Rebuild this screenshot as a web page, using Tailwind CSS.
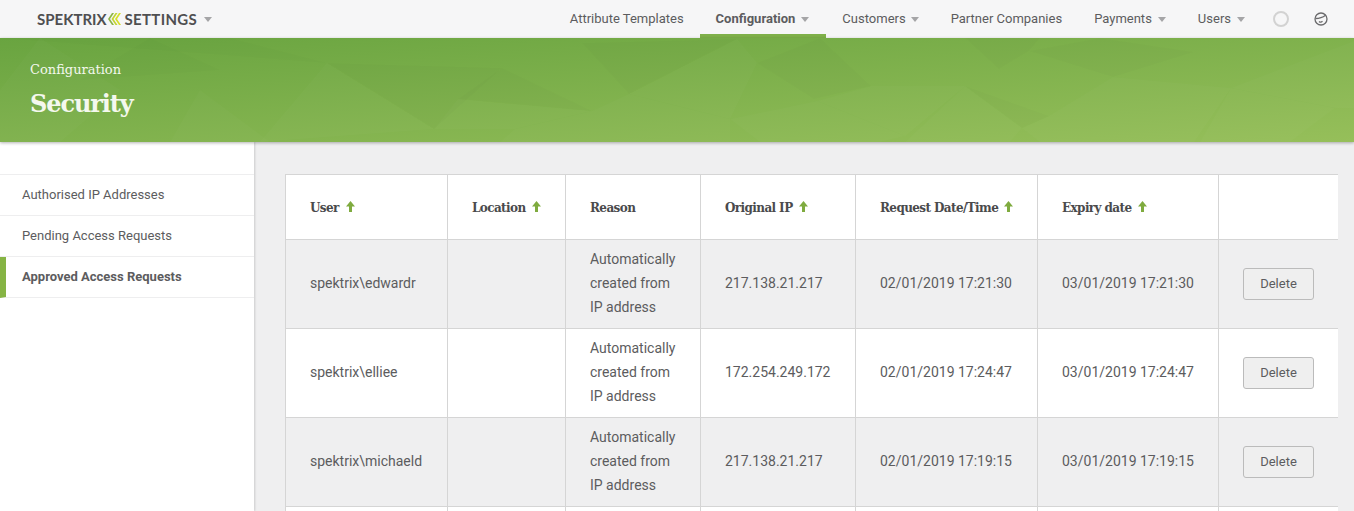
<!DOCTYPE html>
<html lang="en">
<head>
    <meta charset="UTF-8">
    <title>Security - Spektrix Settings</title>
    <script src="https://cdn.jsdelivr.net/npm/@tailwindcss/browser@4"></script>
</head>
<body class="h-[511px] overflow-hidden bg-[#efeff0] font-['Roboto',sans-serif] text-[#5c5c5e]">
    <header class="flex h-[38px] items-center justify-between bg-[#f6f6f7] pl-[37px] pr-[26px]">
        <div class="flex items-center font-['Lato',sans-serif] text-[15px] font-bold text-[#4f4f51]">
            <span>SPEKTRIX</span>
            <svg width="14" height="12" viewBox="0 0 14 12">
                <path d="M5 0h2L3 6l4 6H5L1 6z" fill="#8db545"/>
                <path d="M8.500 0h2l-4 6 4 6h-2l-4-6z" fill="#c3d52f"/>
                <path d="M12 0h2l-4 6 4 6h-2L8 6z" fill="#d6de2b"/>
            </svg>
            <span class="ml-[4px] tracking-[0.3px]">SETTINGS</span>
            <span class="ml-[7px] h-0 w-0 border-x-[4.500px] border-t-[5px] border-x-transparent border-t-[#a5a5a7]"></span>
        </div>
        <nav class="flex h-full items-center text-[13px]">
            <a class="flex h-full items-center px-4">Attribute Templates</a>
            <a class="flex h-full items-center border-b-[4px] border-[#7fb04a] pl-4 pr-[17px] pt-[4px] font-bold">Configuration<span class="ml-[6px] h-0 w-0 border-x-[4.500px] border-t-[5px] border-x-transparent border-t-[#a5a5a7]"></span></a>
            <a class="flex h-full items-center px-4">Customers<span class="ml-[5px] h-0 w-0 border-x-[4.500px] border-t-[5px] border-x-transparent border-t-[#a5a5a7]"></span></a>
            <a class="flex h-full items-center px-4">Partner Companies</a>
            <a class="flex h-full items-center px-4">Payments<span class="ml-[6px] h-0 w-0 border-x-[4.500px] border-t-[5px] border-x-transparent border-t-[#a5a5a7]"></span></a>
            <a class="flex h-full items-center pl-4 pr-[28px]">Users<span class="ml-[6px] h-0 w-0 border-x-[4.500px] border-t-[5px] border-x-transparent border-t-[#a5a5a7]"></span></a>
            <span class="h-4 w-4 rounded-full border-2 border-[#d2d2d2]"></span>
            <svg class="ml-[25px]" width="14" height="14" viewBox="0 0 14 14" fill="none" stroke="#6a6a6c" stroke-width="1.300">
                <circle cx="7" cy="7" r="6"/>
                <path d="M1.500 6.500C4 6.500 8 6 11.500 3.200"/>
                <path d="M5 9.500c1 .8 2.500.8 3.500-.2"/>
            </svg>
        </nav>
    </header>

    <section class="relative h-[104px] overflow-hidden bg-gradient-to-br from-[#69a440] to-[#96bf5a] shadow-[0_1px_3px_rgba(0,0,0,0.3)]">
        <svg class="absolute inset-0" width="1354" height="104" viewBox="0 38 1354 104">
            <g fill="#000" fill-opacity="0.012">
                <polygon points="0,38 327,63 230,38"/>
                <polygon points="327,63 434,129 502,68"/>
                <polygon points="582,43 629,94 737,39"/>
                <polygon points="757,63 814,99 871,86 820,38"/>
                <polygon points="965,38 999,69 1029,51 1040,38"/>
                <polygon points="1113,77 1194,52 1100,38 1029,51"/>
                <polygon points="458,99 592,111 502,68"/>
                <polygon points="80,80 150,38 220,70"/>
                <polygon points="1022,128 1049,116 965,86"/>
            </g>
            <g fill="#fff" fill-opacity="0.018">
                <polygon points="629,94 730,119 757,63 737,39"/>
                <polygon points="629,94 592,111 515,129 500,142 730,142 730,119"/>
                <polygon points="817,101 905,136 965,86 871,86"/>
                <polygon points="905,142 965,86 1022,128 1010,142"/>
                <polygon points="1113,77 1049,116 1022,128 1040,142 1194,142 1231,88"/>
                <polygon points="1231,88 1354,41 1354,108 1335,108"/>
                <polygon points="1231,88 1335,108 1290,142 1200,142"/>
                <polygon points="327,63 260,142 434,129"/>
                <polygon points="730,119 817,101 905,136 880,142 760,142"/>
                <polygon points="40,38 120,90 60,142 0,142 0,90"/>
                <polygon points="458,99 434,129 515,129 592,111"/>
                <polygon points="200,90 270,142 170,142"/>
            </g>
        </svg>
        <div class="relative pl-[30px] pt-[23px] font-['DejaVu_Serif',serif] text-[#f4f8ee]">
            <div class="text-[13px] leading-[18px]">Configuration</div>
            <h1 class="mt-[7px] text-[24px] font-bold leading-[36px] tracking-[-1.100px]">Security</h1>
        </div>
    </section>

    <div class="flex h-[369px]">
        <aside class="w-[254px] shrink-0 bg-white pt-[32px] text-[13px] shadow-[1px_0_2px_rgba(0,0,0,0.15)]">
            <a class="flex h-[42px] items-center border-y border-[#eeeeef] pl-[22px]">Authorised IP Addresses</a>
            <a class="flex h-[41px] items-center border-b border-[#eeeeef] pl-[22px]">Pending Access Requests</a>
            <a class="flex h-[41px] items-center border-b border-[#eeeeef] border-l-[6px] border-l-[#86b444] pl-[16px] font-bold">Approved Access Requests</a>
        </aside>
        <main class="flex-1 overflow-hidden pl-[31px] pt-[32px]">
            <table class="w-[1052px] table-fixed border-collapse text-left text-[14px]">
                <colgroup>
                    <col class="w-[162px]"><col class="w-[118px]"><col class="w-[135px]"><col class="w-[155px]"><col class="w-[182px]"><col class="w-[181px]"><col class="w-[119px]">
                </colgroup>
                <thead>
                    <tr class="h-[65px] bg-white font-['DejaVu_Serif',serif] text-[12px] tracking-[-0.6px] text-[#4a4a4c]">
                        <th class="border border-[#d5d5d5] pl-6 pt-[2px] font-bold">User<svg class="ml-[7px] inline align-[0px]" width="9" height="11" viewBox="0 0 9 11"><path d="M4.500 0L9 5.500H6V11H3V5.500H0z" fill="#7fab3f"/></svg></th>
                        <th class="border border-[#d5d5d5] pl-6 pt-[2px] font-bold">Location<svg class="ml-[6px] inline align-[0px]" width="9" height="11" viewBox="0 0 9 11"><path d="M4.500 0L9 5.500H6V11H3V5.500H0z" fill="#7fab3f"/></svg></th>
                        <th class="border border-[#d5d5d5] pl-6 pt-[2px] font-bold">Reason</th>
                        <th class="border border-[#d5d5d5] pl-6 pt-[2px] font-bold">Original IP<svg class="ml-[6px] inline align-[0px]" width="9" height="11" viewBox="0 0 9 11"><path d="M4.500 0L9 5.500H6V11H3V5.500H0z" fill="#7fab3f"/></svg></th>
                        <th class="border border-[#d5d5d5] pl-6 pt-[2px] font-bold">Request Date/Time<svg class="ml-[6px] inline align-[0px]" width="9" height="11" viewBox="0 0 9 11"><path d="M4.500 0L9 5.500H6V11H3V5.500H0z" fill="#7fab3f"/></svg></th>
                        <th class="border border-[#d5d5d5] pl-6 pt-[2px] font-bold">Expiry date<svg class="ml-[7px] inline align-[0px]" width="9" height="11" viewBox="0 0 9 11"><path d="M4.500 0L9 5.500H6V11H3V5.500H0z" fill="#7fab3f"/></svg></th>
                        <th class="border-y border-l border-[#d5d5d5]"></th>
                    </tr>
                </thead>
                <tbody>
                    <tr class="h-[89px] bg-[#efeff0]">
                        <td class="border border-[#d5d5d5] pb-[2px] pl-6">spektrix\edwardr</td>
                        <td class="border border-[#d5d5d5] pl-6"></td>
                        <td class="border border-[#d5d5d5] pb-[2px] pl-6 pr-5 leading-6">Automatically created from IP address</td>
                        <td class="border border-[#d5d5d5] pb-[2px] pl-6">217.138.21.217</td>
                        <td class="border border-[#d5d5d5] pb-[2px] pl-6">02/01/2019 17:21:30</td>
                        <td class="border border-[#d5d5d5] pb-[2px] pl-6">03/01/2019 17:21:30</td>
                        <td class="border-y border-l border-[#d5d5d5] pl-6"><button class="h-8 w-[71px] rounded-[3px] border border-[#bbbbbb] bg-[#efefef] text-[13px]">Delete</button></td>
                    </tr>
                    <tr class="h-[89px] bg-white">
                        <td class="border border-[#d5d5d5] pb-[2px] pl-6">spektrix\elliee</td>
                        <td class="border border-[#d5d5d5] pl-6"></td>
                        <td class="border border-[#d5d5d5] pb-[2px] pl-6 pr-5 leading-6">Automatically created from IP address</td>
                        <td class="border border-[#d5d5d5] pb-[2px] pl-6">172.254.249.172</td>
                        <td class="border border-[#d5d5d5] pb-[2px] pl-6">02/01/2019 17:24:47</td>
                        <td class="border border-[#d5d5d5] pb-[2px] pl-6">03/01/2019 17:24:47</td>
                        <td class="border-y border-l border-[#d5d5d5] pl-6"><button class="h-8 w-[71px] rounded-[3px] border border-[#bbbbbb] bg-[#efefef] text-[13px]">Delete</button></td>
                    </tr>
                    <tr class="h-[89px] bg-[#efeff0]">
                        <td class="border border-[#d5d5d5] pb-[2px] pl-6">spektrix\michaeld</td>
                        <td class="border border-[#d5d5d5] pl-6"></td>
                        <td class="border border-[#d5d5d5] pb-[2px] pl-6 pr-5 leading-6">Automatically created from IP address</td>
                        <td class="border border-[#d5d5d5] pb-[2px] pl-6">217.138.21.217</td>
                        <td class="border border-[#d5d5d5] pb-[2px] pl-6">02/01/2019 17:19:15</td>
                        <td class="border border-[#d5d5d5] pb-[2px] pl-6">03/01/2019 17:19:15</td>
                        <td class="border-y border-l border-[#d5d5d5] pl-6"><button class="h-8 w-[71px] rounded-[3px] border border-[#bbbbbb] bg-[#efefef] text-[13px]">Delete</button></td>
                    </tr>
                    <tr class="h-[4px] bg-white">
                        <td class="border-x border-[#d5d5d5]"></td><td class="border-x border-[#d5d5d5]"></td><td class="border-x border-[#d5d5d5]"></td><td class="border-x border-[#d5d5d5]"></td><td class="border-x border-[#d5d5d5]"></td><td class="border-x border-[#d5d5d5]"></td><td class="border-l border-[#d5d5d5]"></td>
                    </tr>
                </tbody>
            </table>
        </main>
    </div>
</body>
</html>
